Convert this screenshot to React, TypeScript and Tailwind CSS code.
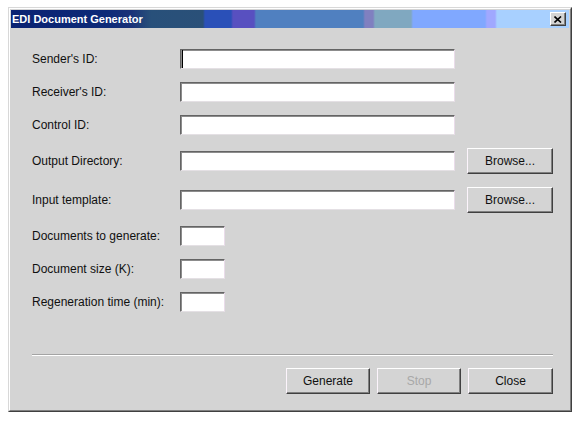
import React from 'react';

const font = "font-['Liberation_Sans',Arial,sans-serif]";

const Field = ({ wide = true, caret = false }: { wide?: boolean; caret?: boolean }) => (
  <div
    className={`${wide ? 'w-[275px]' : 'w-[45px]'} h-[20px] flex bg-white border border-t-[#646464] border-l-[#646464] border-b-[#e4e0e4] border-r-[#eadcea] shadow-[inset_1px_1px_0_#8c8c8c]`}
  >
    {caret && <div className="ml-px w-px h-full bg-black" />}
  </div>
);

const Button = ({ label, disabled = false, width = 'w-[85px]' }: { label: string; disabled?: boolean; width?: string }) => (
  <button
    className={`${width} h-[26px] flex items-center justify-center bg-[#d4d4d4] border border-t-white border-l-[#fcf4fc] border-b-[#404040] border-r-[#404040] shadow-[inset_-1px_-1px_0_#808080] text-[12px] ${
      disabled ? 'text-[#a8a8a8]' : 'text-[#101010]'
    }`}
  >
    {label}
  </button>
);

const rows = [
  { label: "Sender's ID:", caret: true },
  { label: "Receiver's ID:" },
  { label: 'Control ID:' },
  { label: 'Output Directory:', browse: true },
  { label: 'Input template:', browse: true },
  { label: 'Documents to generate:', small: true },
  { label: 'Document size (K):', small: true },
  { label: 'Regeneration time (min):', small: true },
];

export default function App() {
  return (
    <div className={`w-[577px] h-[421px] bg-white pt-[7px] pl-[8px] ${font}`}>
      <div className="w-[564px] h-[405px] border border-t-[#d8d8d8] border-l-[#d8d8d8] border-b-[#404040] border-r-[#404040]">
        <div className="h-full border border-t-white border-l-white border-b-[#808080] border-r-[#808080] bg-[#d4d4d4] p-px flex flex-col">
          {/* title bar */}
          <div className="h-[18px] flex items-center justify-between pl-px pr-[3px] bg-[linear-gradient(90deg,#0a2272_0px,#0c2a78_95px,#1a3278_120px,#28507a_140px,#2a5078_192px,#2a50b8_194px,#2a50b8_220px,#5850c0_222px,#5850c0_243px,#5080c0_245px,#5080c0_352px,#8080c0_354px,#8080c0_362px,#80a8c0_364px,#80a8c0_400px,#80a8ff_402px,#80a8ff_474px,#a0a8ff_476px,#a0a8ff_484px,#a8d0ff_486px,#a8d0ff_100%)]">
            <span className="text-white font-bold text-[11px] leading-none">EDI Document Generator</span>
            <div className="w-[16px] h-[14px] bg-[#d4d4d4] border border-t-white border-l-white border-b-[#404040] border-r-[#404040] shadow-[inset_-1px_-1px_0_#808080] flex items-center justify-center">
              <svg width="8" height="7" viewBox="0 0 8 7">
                <path d="M0.5 0.5 L7 6.5 M7 0.5 L0.5 6.5" stroke="black" strokeWidth="1.6" />
              </svg>
            </div>
          </div>

          {/* form */}
          <div className="flex-1 flex flex-col pt-[21px] pl-[21px] pr-[16px]">
            <div className="flex flex-col gap-[13px]">
              {rows.map((r) => (
                <div key={r.label} className={`flex items-center ${r.browse ? 'h-[26px]' : 'h-[20px]'}`}>
                  <span className="w-[148px] text-[12px] text-[#101010]">{r.label}</span>
                  <Field wide={!r.small} caret={r.caret} />
                  {r.browse && (
                    <div className="ml-[12px]">
                      <Button label="Browse..." width="w-[86px]" />
                    </div>
                  )}
                </div>
              ))}
            </div>

            <div className="mt-[42px] h-[2px] border-t border-t-[#a4a4a4] border-b border-b-white" />

            <div className="mt-[12px] flex justify-end gap-[7px]">
              <Button label="Generate" width="w-[84px]" />
              <Button label="Stop" disabled width="w-[84px]" />
              <Button label="Close" width="w-[85px]" />
            </div>
          </div>
        </div>
      </div>
    </div>
  );
}
